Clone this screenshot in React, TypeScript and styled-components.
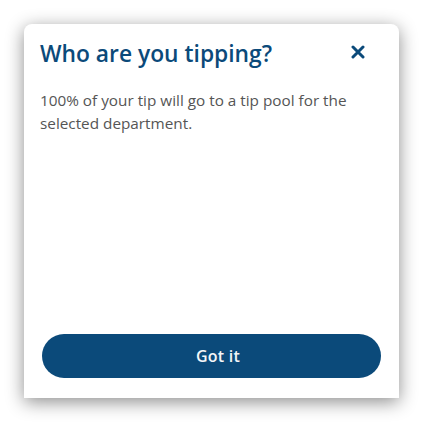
import React from 'react'
import styled, { createGlobalStyle } from 'styled-components'

const GlobalStyle = createGlobalStyle`
  html, body {
    margin: 0;
    padding: 0;
    background: #ffffff;
    font-family: "Open Sans", "Noto Sans", sans-serif;
  }
`

const Page = styled.div`
  width: 423px;
  height: 423px;
  display: flex;
  align-items: flex-start;
  justify-content: center;
  padding-top: 24px;
  box-sizing: border-box;
`

const Card = styled.div`
  width: 375px;
  height: 374px;
  background: #ffffff;
  border-radius: 8px 8px 0 0;
  box-shadow: 0 4px 18px rgba(0, 0, 0, 0.45);
  display: flex;
  flex-direction: column;
  padding: 14px 18px 20px 16px;
  box-sizing: border-box;
`

const Header = styled.div`
  display: flex;
  align-items: flex-start;
  justify-content: space-between;
`

const Title = styled.h2`
  margin: 0;
  font-size: 22.8px;
  font-weight: 600;
  line-height: 32px;
  color: #0b4a7a;
`

const CloseButton = styled.button`
  background: none;
  border: none;
  padding: 0;
  margin: 7px 16px 0 0;
  width: 14px;
  height: 14px;
  display: flex;
  cursor: pointer;
`

const Body = styled.p`
  margin: 19px 0 0;
  font-size: 15.3px;
  font-weight: 400;
  line-height: 23px;
  color: #555555;
  flex: 1;
`

const PrimaryButton = styled.button`
  height: 44px;
  margin-left: 2px;
  padding: 0 0 0 13px;
  border: none;
  border-radius: 22px;
  background: #0b4a7a;
  color: #f4f6f8;
  font-family: "Open Sans", "Noto Sans", sans-serif;
  font-size: 16px;
  font-weight: 600;
  letter-spacing: 0.2px;
  cursor: pointer;
`

const App: React.FC = () => {
  return (
    <>
      <GlobalStyle />
      <Page>
        <Card>
          <Header>
            <Title>Who are you tipping?</Title>
            <CloseButton aria-label="Close">
              <svg width="14" height="14" viewBox="0 0 14 14">
                <path d="M2 2L12 12M12 2L2 12" stroke="#0b4a7a" strokeWidth="3" strokeLinecap="round" />
              </svg>
            </CloseButton>
          </Header>
          <Body>100% of your tip will go to a tip pool for the selected department.</Body>
          <PrimaryButton>Got it</PrimaryButton>
        </Card>
      </Page>
    </>
  )
}

export default App
